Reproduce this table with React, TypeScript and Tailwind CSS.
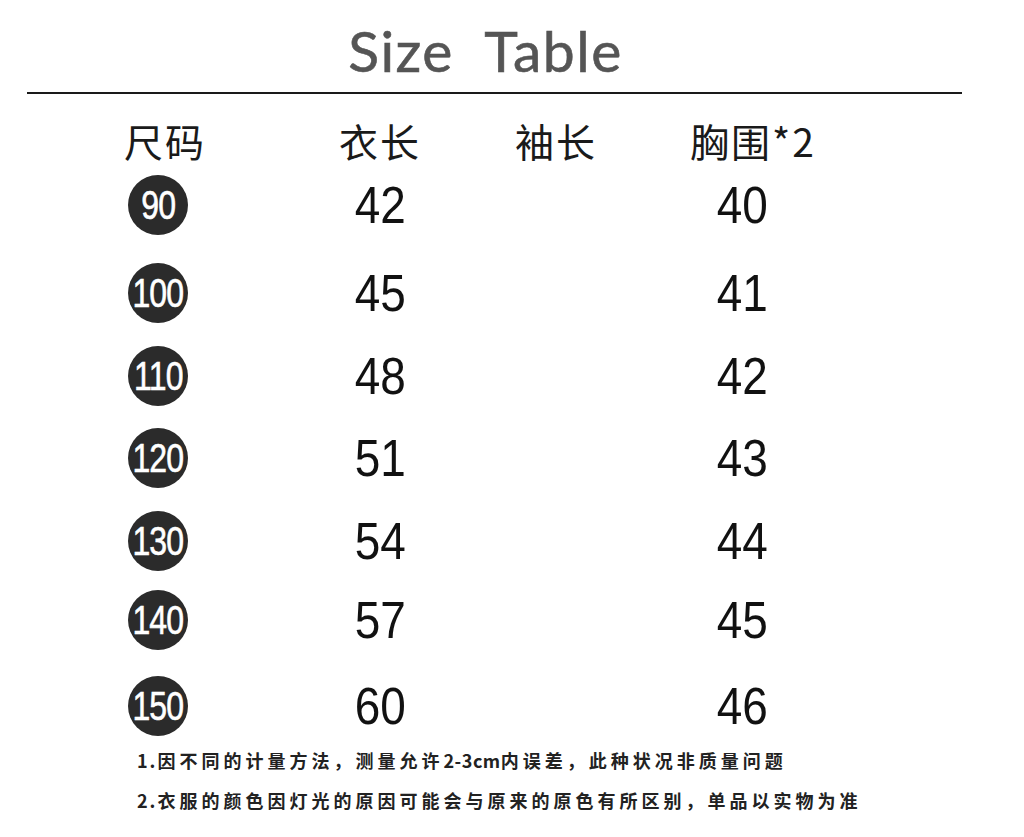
import React from 'react';

const rows = [
  { size: '90', length: '42', chest: '40', gap: 'mt-[13px]' },
  { size: '100', length: '45', chest: '41', gap: 'mt-[28px]' },
  { size: '110', length: '48', chest: '42', gap: 'mt-[23px]' },
  { size: '120', length: '51', chest: '43', gap: 'mt-[22px]' },
  { size: '130', length: '54', chest: '44', gap: 'mt-[23px]' },
  { size: '140', length: '57', chest: '45', gap: 'mt-[19px]' },
  { size: '150', length: '60', chest: '46', gap: 'mt-[26px]' },
];

const cjk = "font-['Noto_Sans_CJK_SC',sans-serif]";
const num = "font-['Liberation_Sans',Arial,sans-serif]";

const App: React.FC = () => {
  return (
    <div className="w-[1024px] h-[837px] bg-white overflow-hidden">
      {/* 标题 */}
      <div className="ml-[27px] w-[935px] h-[94px] border-b-2 border-[#1a1a1a] flex justify-center pt-[22px]">
        <h1 className="font-['Lato',sans-serif] text-[57px] leading-none text-[#555] tracking-[1.5px] pr-[18px] [word-spacing:16px] [-webkit-text-stroke:0.6px_#555]">
          Size Table
        </h1>
      </div>

      {/* 表头 */}
      <div className={`mt-[24px] grid grid-cols-[200px_240px_112px_272px] ml-[60px] h-[44px] items-center text-[39px] leading-none text-[#1a1a1a] tracking-[2px] ${cjk}`}>
        <div className="text-center pl-[10px]">尺码</div>
        <div className="text-center">衣长</div>
        <div className="text-center">袖长</div>
        <div className="text-center pl-[10px]">胸围*2</div>
      </div>

      {/* 尺码行 */}
      {rows.map((r) => (
        <div key={r.size} className={`${r.gap} grid grid-cols-[200px_240px_112px_272px] ml-[60px] h-[60px] items-center`}>
          <div className="flex justify-center pr-[4px]">
            <div className="w-[60px] h-[60px] rounded-full bg-[#2b2b2b] flex items-center justify-center">
              <span className={`${num} text-white text-[40px] leading-none scale-x-[0.8] tracking-[-1px] [-webkit-text-stroke:0.6px_white]`}>{r.size}</span>
            </div>
          </div>
          <div className="flex justify-center">
            <span className={`${num} text-[#111] text-[51px] leading-none scale-x-[0.9]`}>{r.length}</span>
          </div>
          <div />
          <div className="flex justify-center pr-[12px]">
            <span className={`${num} text-[#111] text-[51px] leading-none scale-x-[0.9]`}>{r.chest}</span>
          </div>
        </div>
      ))}

      {/* 说明 */}
      <div className={`ml-[137px] mt-[12px] text-[18px] leading-[24px] text-[#222] font-bold tracking-[4px] ${cjk}`}>
        <p>
          <span className="tracking-[2px]">1.</span>因不同的计量方法，测量允许<span className="tracking-[0.5px]">2-3cm</span>内误差，此种状况非质量问题
        </p>
        <p className="mt-[16px]">
          <span className="tracking-[2px]">2.</span>衣服的颜色因灯光的原因可能会与原来的原色有所区别，单品以实物为准
        </p>
      </div>
    </div>
  );
};

export default App;
